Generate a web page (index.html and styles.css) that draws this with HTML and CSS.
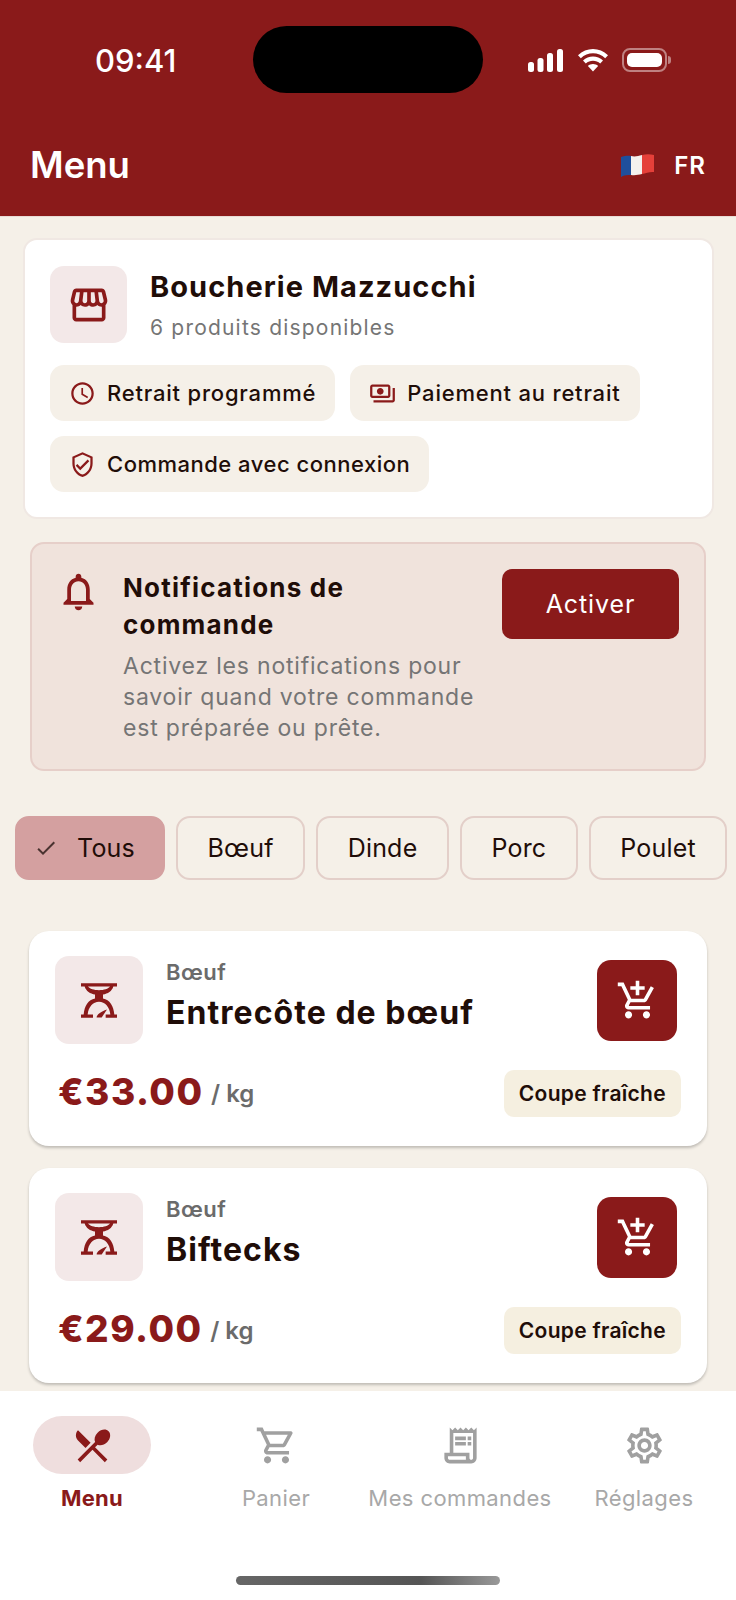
FILE: index.html
```html
<!DOCTYPE html>
<html lang="fr">
<head>
<meta charset="UTF-8">
<meta name="viewport" content="width=device-width, initial-scale=1.0">
<title>Menu</title>
<link rel="stylesheet" href="styles.css">
</head>
<body>

<svg class="sprite" width="0" height="0">
    <symbol id="i-scale" viewBox="0 0 108 104">
        <path d="M0 0H108V10H97C93 24 80 32 66 34V46C86 50 98 68 100 94H108V104H74V94H88C86 72 72 56 54 56C36 56 22 72 20 94H36V104H0V94H8C10 68 22 50 42 46V34C28 32 15 24 11 10H0ZM21 10C26 17 39 21 54 21C69 21 82 17 87 10Z"/>
        <path d="M78 79L62 103H47C46 95 60 85 78 79Z"/>
    </symbol>
    <symbol id="i-cart-add" viewBox="0 0 24 24">
        <path d="M11 9h2V6h3V4h-3V1h-2v3H8v2h3v3zm-4 9c-1.1 0-1.99.9-1.99 2S5.9 22 7 22s2-.9 2-2-.9-2-2-2zm10 0c-1.1 0-1.99.9-1.99 2s.89 2 1.99 2 2-.9 2-2-.9-2-2-2zm-9.83-3.25l.03-.12.9-1.63h7.45c.75 0 1.41-.41 1.75-1.03l3.86-7.01L19.42 4h-.01l-1.1 2-2.76 5H8.53l-.13-.27L6.16 6l-.95-2-.94-2H1v2h2l3.6 7.59-1.35 2.45c-.16.28-.25.61-.25.96 0 1.1.9 2 2 2h12v-2H7.42c-.13 0-.25-.11-.25-.25z"/>
    </symbol>
</svg>

<header class="topbar">
    <div class="island"></div>
    <div class="status">
        <span class="time">09:41</span>
        <div class="status-icons">
            <svg class="ic-signal" viewBox="0 0 35 23"><rect x="0" y="13" width="6" height="10" rx="2.5"/><rect x="9.5" y="9" width="6" height="14" rx="2.5"/><rect x="19" y="4" width="6" height="19" rx="2.5"/><rect x="29" y="0" width="6" height="23" rx="2.5"/></svg>
            <svg class="ic-wifi" viewBox="0 0 30 23"><path d="M15 0C20.500 0 25.700 2.200 30 6.200L27.200 9.200C23.800 6 19.500 4.200 15 4.200C10.500 4.200 6.200 6 2.800 9.200L0 6.200C4.300 2.200 9.500 0 15 0Z"/><path d="M15 7.500C18.700 7.500 22.200 9 25 11.500L22.200 14.500C20.200 12.700 17.700 11.700 15 11.700C12.300 11.700 9.800 12.700 7.800 14.500L5 11.500C7.800 9 11.300 7.500 15 7.500Z"/><path d="M15 15C16.900 15 18.700 15.700 20.100 16.900L15 22.500L9.900 16.900C11.300 15.700 13.100 15 15 15Z"/></svg>
            <div class="battery"><div class="battery-fill"></div></div>
        </div>
    </div>
    <div class="title-row">
        <h1>Menu</h1>
        <div class="lang">
            <svg class="flag" viewBox="0 0 33 23">
                <path fill="#1f4f9c" d="M0 3C3 2 7 1.500 10 2V21C7 21 3 21 0 23Z"/>
                <path fill="#f4f1ee" d="M10 2C14 3 17 2 21 1V20C17 21 14 21.500 10 21Z"/>
                <path fill="#e5403a" d="M21 1C25 0 29 0 33 1V18C29 17.500 25 19 21 20Z"/>
            </svg>
            <span>FR</span>
        </div>
    </div>
</header>

<main class="content">
    <section class="shop">
        <div class="shop-head">
            <div class="shop-logo">
                <svg class="ic-store" viewBox="0 0 24 24"><path d="M21.9 8.89l-1.05-4.37c-.22-.9-1-1.52-1.91-1.52H5.05c-.9 0-1.69.63-1.9 1.52L2.1 8.89c-.24 1.02-.02 2.06.62 2.88.08.11.19.19.28.29V19c0 1.1.9 2 2 2h14c1.1 0 2-.9 2-2v-6.94c.09-.09.2-.18.28-.28.64-.82.87-1.87.62-2.89zm-2.99-3.9l1.05 4.37c.1.42.01.84-.25 1.17-.14.18-.44.47-.94.47-.61 0-1.14-.49-1.21-1.14L16.98 5l1.93-.01zM13 5h1.96l.54 4.52c.05.39-.07.78-.33 1.07-.22.26-.54.41-.95.41-.67 0-1.22-.59-1.22-1.31V5zM8.49 9.52L9.04 5H11v4.69c0 .72-.55 1.31-1.29 1.31-.34 0-.65-.15-.89-.41-.25-.29-.37-.68-.33-1.07zm-4.45-.16L5.05 5h1.97l-.58 4.86c-.08.65-.6 1.14-1.21 1.14-.49 0-.8-.29-.93-.47-.27-.32-.36-.75-.26-1.17zM5 19v-6.03c.08.01.15.03.23.03.87 0 1.66-.36 2.24-.95.6.6 1.4.95 2.31.95.87 0 1.65-.36 2.23-.93.59.57 1.39.93 2.29.93.84 0 1.64-.35 2.24-.95.58.59 1.37.95 2.24.95.08 0 .15-.02.23-.03V19H5z"/></svg>
            </div>
            <div class="shop-text">
                <h2 class="shop-name">Boucherie Mazzucchi</h2>
                <p class="shop-sub">6 produits disponibles</p>
            </div>
        </div>
        <div class="shop-tags">
            <div class="shop-tag">
                <svg viewBox="0 0 24 24"><path d="M11.990 2C6.470 2 2 6.480 2 12s4.470 10 9.990 10C17.520 22 22 17.520 22 12S17.520 2 11.990 2zM12 20c-4.420 0-8-3.580-8-8s3.580-8 8-8 8 3.580 8 8-3.580 8-8 8zm.5-13H11v6l5.250 3.150.75-1.230-4.500-2.670z"/></svg>
                Retrait programmé
            </div>
            <div class="shop-tag">
                <svg viewBox="0 0 24 24"><path d="M19 14V6c0-1.100-.9-2-2-2H3c-1.100 0-2 .9-2 2v8c0 1.100.9 2 2 2h14c1.100 0 2-.9 2-2zm-2 0H3V6h14v8zm-7-7c-1.660 0-3 1.340-3 3s1.340 3 3 3 3-1.340 3-3-1.340-3-3-3zm13 0v11c0 1.100-.9 2-2 2H4v-2h17V7h2z"/></svg>
                Paiement au retrait
            </div>
            <div class="shop-tag long">
                <svg viewBox="0 0 24 24"><path d="M12 1L3 5v6c0 5.550 3.840 10.740 9 12 5.160-1.260 9-6.450 9-12V5l-9-4zm7 10c0 4.520-2.980 8.690-7 9.930-4.020-1.240-7-5.410-7-9.930V6.300l7-3.110 7 3.110V11zm-11.590.59L6 13l4 4 8-8-1.410-1.420L10 14.170z"/></svg>
                Commande avec connexion
            </div>
        </div>
    </section>

    <section class="notice">
        <svg class="ic-bell" viewBox="0 0 24 24"><path d="M12 22c1.100 0 2-.9 2-2h-4c0 1.100.9 2 2 2zm6-6v-5c0-3.070-1.630-5.640-4.500-6.320V4c0-.83-.67-1.500-1.500-1.500s-1.500.67-1.500 1.500v.68C7.640 5.360 6 7.920 6 11v5l-2 2v1h16v-1l-2-2zm-2 1H8v-6c0-2.480 1.510-4.500 4-4.500s4 2.020 4 4.500v6z"/></svg>
        <div class="notice-text">
            <h3>Notifications de commande</h3>
            <p>Activez les notifications pour savoir quand votre commande est préparée ou prête.</p>
        </div>
        <button class="notice-btn">Activer</button>
    </section>

    <nav class="filters">
        <button class="filter active">
            <svg viewBox="0 0 24 24"><path d="M9 16.170L4.830 12l-1.420 1.410L9 19 21 7l-1.410-1.410z"/></svg>
            Tous
        </button>
        <button class="filter">Bœuf</button>
        <button class="filter">Dinde</button>
        <button class="filter">Porc</button>
        <button class="filter">Poulet</button>
    </nav>

    <article class="product">
        <div class="product-top">
            <div class="product-pic"><svg class="ic-scale"><use href="#i-scale"/></svg></div>
            <div class="product-info">
                <div class="product-cat">Bœuf</div>
                <div class="product-name">Entrecôte de bœuf</div>
            </div>
            <button class="add-btn"><svg class="ic-add"><use href="#i-cart-add"/></svg></button>
        </div>
        <div class="product-bottom">
            <div class="product-price"><span class="price">€33.00</span> <span class="unit">/ kg</span></div>
            <span class="cut">Coupe fraîche</span>
        </div>
    </article>

    <article class="product">
        <div class="product-top">
            <div class="product-pic"><svg class="ic-scale"><use href="#i-scale"/></svg></div>
            <div class="product-info">
                <div class="product-cat">Bœuf</div>
                <div class="product-name">Biftecks</div>
            </div>
            <button class="add-btn"><svg class="ic-add"><use href="#i-cart-add"/></svg></button>
        </div>
        <div class="product-bottom">
            <div class="product-price"><span class="price">€29.00</span> <span class="unit">/ kg</span></div>
            <span class="cut">Coupe fraîche</span>
        </div>
    </article>
</main>

<footer class="tabbar">
    <div class="tabs">
        <div class="tab active">
            <div class="tab-icon"><svg viewBox="0 0 24 24"><path d="M8.100 13.340l2.830-2.830L3.910 3.500c-1.560 1.560-1.560 4.090 0 5.660l4.190 4.180zm6.780-1.810c1.530.71 3.680.21 5.270-1.380 1.910-1.910 2.280-4.650.81-6.120-1.460-1.460-4.200-1.100-6.120.81-1.590 1.590-2.090 3.740-1.380 5.270L3.700 19.870l1.410 1.410L12 14.410l6.880 6.880 1.410-1.410L13.410 13l1.470-1.470z"/></svg></div>
            <span>Menu</span>
        </div>
        <div class="tab">
            <div class="tab-icon"><svg viewBox="0 0 24 24"><path d="M15.550 13c.75 0 1.410-.41 1.750-1.030l3.580-6.490c.37-.66-.11-1.480-.87-1.480H5.210l-.94-2H1v2h2l3.600 7.590-1.350 2.440C4.520 15.370 5.480 17 7 17h12v-2H7l1.100-2h7.450zM6.160 6h12.150l-2.760 5H8.530L6.160 6zM7 18c-1.100 0-1.990.9-1.990 2S5.900 22 7 22s2-.9 2-2-.9-2-2-2zm10 0c-1.100 0-1.990.9-1.990 2s.89 2 1.990 2 2-.9 2-2-.9-2-2-2z"/></svg></div>
            <span>Panier</span>
        </div>
        <div class="tab">
            <div class="tab-icon"><svg viewBox="0 0 24 24"><path d="M19.500 3.500L18 2l-1.500 1.500L15 2l-1.500 1.500L12 2l-1.500 1.500L9 2 7.500 3.500 6 2v14H3v3c0 1.660 1.340 3 3 3h12c1.660 0 3-1.340 3-3V2l-1.500 1.500zM15 20H6c-.55 0-1-.45-1-1v-1h10v2zm4-1c0 .55-.45 1-1 1s-1-.45-1-1v-3H8V5h11v14z"/><path d="M9 7h6v2H9zM16 7h2v2h-2zM9 10h6v2H9zM16 10h2v2h-2z"/></svg></div>
            <span>Mes commandes</span>
        </div>
        <div class="tab">
            <div class="tab-icon"><svg viewBox="0 0 24 24"><path d="M19.430 12.980c.04-.32.07-.64.07-.98 0-.34-.03-.66-.07-.98l2.110-1.650c.19-.15.24-.42.12-.64l-2-3.460c-.09-.16-.26-.25-.44-.25-.06 0-.12.01-.17.03l-2.490 1c-.52-.4-1.080-.73-1.690-.98l-.38-2.650C14.460 2.180 14.250 2 14 2h-4c-.25 0-.46.18-.49.42l-.38 2.650c-.61.25-1.170.59-1.690.98l-2.490-1c-.06-.02-.12-.03-.18-.03-.17 0-.34.09-.43.25l-2 3.460c-.13.22-.07.49.12.64l2.110 1.650c-.04.32-.07.65-.07.98 0 .33.03.66.07.98l-2.110 1.650c-.19.15-.24.42-.12.64l2 3.460c.09.16.26.25.44.25.06 0 .12-.01.17-.03l2.490-1c.52.4 1.080.73 1.690.98l.38 2.650c.03.24.24.42.49.42h4c.25 0 .46-.18.49-.42l.38-2.650c.61-.25 1.170-.59 1.690-.98l2.490 1c.06.02.12.03.18.03.17 0 .34-.09.43-.25l2-3.460c.12-.22.07-.49-.12-.64l-2.110-1.650zm-1.980-1.710c.04.31.05.52.05.73 0 .21-.02.43-.05.73l-.14 1.130.89.7 1.080.84-.7 1.210-1.270-.51-1.040-.42-.9.68c-.43.32-.84.56-1.250.73l-1.060.43-.16 1.130-.2 1.350h-1.400l-.19-1.350-.16-1.130-1.060-.43c-.43-.18-.83-.41-1.230-.71l-.91-.7-1.060.43-1.270.51-.7-1.210 1.080-.84.89-.7-.14-1.130c-.03-.31-.05-.54-.05-.74s.02-.43.05-.73l.14-1.130-.89-.7-1.080-.84.7-1.210 1.270.51 1.040.42.9-.68c.43-.32.84-.56 1.250-.73l1.060-.43.16-1.130.2-1.350h1.390l.19 1.350.16 1.130 1.060.43c.43.18.83.41 1.230.71l.91.7 1.060-.43 1.270-.51.7 1.210-1.070.85-.89.7.14 1.130zM12 8c-2.210 0-4 1.790-4 4s1.790 4 4 4 4-1.790 4-4-1.790-4-4-4zm0 6c-1.100 0-2-.9-2-2s.9-2 2-2 2 .9 2 2-.9 2-2 2z"/></svg></div>
            <span>Réglages</span>
        </div>
    </div>
    <div class="home-bar"></div>
</footer>

</body>
</html>
```

FILE: styles.css
```css
* {
    box-sizing: border-box;
}

body {
    display: flex;
    flex-direction: column;
    height: 1600px;
    margin: 0;
    overflow: hidden;
    font-family: Inter, "Noto Sans", sans-serif;
    color: #1f0d08;
    background-color: #f5f0e8;
}

h1, h2, h3, p {
    margin: 0;
}

button {
    font-family: inherit;
}

.sprite {
    position: absolute;
}

/* top bar */
.topbar {
    position: relative;
    flex: none;
    height: 217px;
    padding-top: 48px;
    background-color: #8a1a1a;
    border-bottom: 1px solid #e9dcd6;
    color: #fff;
}

.island {
    position: absolute;
    left: 253px;
    top: 26px;
    width: 230px;
    height: 67px;
    border-radius: 34px;
    background-color: #000;
}

.status {
    display: flex;
    justify-content: space-between;
    align-items: center;
    height: 24px;
    padding: 0 69px 0 95px;
}

.time {
    font-size: 31px;
    font-weight: 500;
}

.status-icons {
    display: flex;
    align-items: center;
    gap: 14px;
}

.status-icons svg {
    fill: #fff;
    display: block;
}

.ic-signal {
    width: 35px;
    height: 23px;
    margin-right: 1px;
}

.ic-wifi {
    width: 30px;
    height: 23px;
}

.battery {
    position: relative;
    width: 45px;
    height: 24px;
    padding: 3px;
    border: 2px solid rgba(255, 255, 255, 0.45);
    border-radius: 8px;
}

.battery::after {
    content: "";
    position: absolute;
    right: -6px;
    top: 6px;
    width: 3px;
    height: 8px;
    border-radius: 0 3px 3px 0;
    background-color: rgba(255, 255, 255, 0.45);
}

.battery-fill {
    width: 100%;
    height: 100%;
    border-radius: 5px;
    background-color: #fff;
}

.title-row {
    display: flex;
    justify-content: space-between;
    align-items: center;
    height: 42px;
    margin-top: 72px;
    padding: 0 30px 0 30px;
}

.title-row h1 {
    font-size: 36.5px;
    font-weight: 600;
}

.lang {
    display: flex;
    align-items: center;
    gap: 20px;
    font-size: 24px;
    font-weight: 600;
    letter-spacing: 1px;
}

.flag {
    width: 33px;
    height: 23px;
}

/* content */
.content {
    flex: 1;
    min-height: 0;
    overflow: hidden;
}

.shop {
    margin: 21px 22px 0 23px;
    padding: 26px 25px 25px 25px;
    background-color: #fff;
    border: 2px solid #f0e8e3;
    border-radius: 14px;
}

.shop-head {
    display: flex;
    align-items: center;
    gap: 23px;
}

.shop-logo {
    display: flex;
    justify-content: center;
    align-items: center;
    width: 77px;
    height: 77px;
    border-radius: 14px;
    background-color: #f3e8e8;
}

.ic-store {
    width: 44px;
    height: 44px;
    fill: #8a1a1a;
}

.shop-text {
    padding-top: 2px;
}

.shop-name {
    font-size: 29px;
    font-weight: 700;
    letter-spacing: 1.05px;
    line-height: 36px;
}

.shop-sub {
    margin-top: 9px;
    font-size: 21px;
    line-height: 28px;
    letter-spacing: 1.2px;
    color: #757575;
}

.shop-tags {
    display: flex;
    flex-wrap: wrap;
    gap: 15px;
    margin-top: 22px;
}

.shop-tag {
    display: flex;
    align-items: center;
    gap: 11px;
    height: 56px;
    padding: 0 19px;
    border-radius: 14px;
    background-color: #f5f0e8;
    font-size: 22px;
    font-weight: 500;
    letter-spacing: 0.8px;
}

.shop-tag.long {
    letter-spacing: 0.5px;
}

.shop-tag svg {
    width: 27px;
    height: 27px;
    fill: #8a1a1a;
}

.notice {
    display: flex;
    align-items: flex-start;
    margin: 23px 30px 0;
    padding: 25px 25px 25px 24px;
    background-color: #f0e3dc;
    border: 2px solid #e6cfc9;
    border-radius: 14px;
}

.ic-bell {
    flex: none;
    width: 45px;
    height: 45px;
    margin-right: 22px;
    fill: #8a1a1a;
}

.notice-text {
    width: 352px;
    flex: none;
}

.notice-text h3 {
    font-size: 26px;
    font-weight: 700;
    line-height: 37px;
    letter-spacing: 1.2px;
}

.notice-text p {
    margin-top: 8px;
    font-size: 23px;
    line-height: 31px;
    letter-spacing: 0.8px;
    color: #757575;
}

.notice-btn {
    flex: none;
    width: 177px;
    height: 70px;
    margin-left: auto;
    border: none;
    border-radius: 10px;
    background-color: #8a1a1a;
    color: #fff;
    font-size: 25px;
    font-weight: 400;
    letter-spacing: 0.9px;
}

.filters {
    display: flex;
    gap: 11px;
    margin-top: 45px;
    padding-left: 15px;
}

.filter {
    display: flex;
    justify-content: center;
    align-items: center;
    height: 64px;
    padding: 0 29.5px;
    background-color: #f5f0e8;
    border: 2px solid #e3cfc9;
    border-radius: 14px;
    color: #1f0d08;
    font-size: 25px;
    letter-spacing: 0.2px;
}

.filter svg {
    width: 24px;
    height: 24px;
    margin-right: 19px;
    fill: #4a3330;
}

.filter.active {
    padding: 0 28px 0 17px;
    background-color: #d4a0a0;
    border-color: #d4a0a0;
}

.product {
    margin: 0 29px 22px;
    padding: 25px 26px 29px;
    background-color: #fff;
    border-radius: 20px;
    box-shadow: 0 2px 3px rgba(0, 0, 0, 0.22);
}

.filters + .product {
    margin-top: 51px;
}

.product-top {
    display: flex;
    align-items: center;
}

.product-pic {
    display: flex;
    flex: none;
    justify-content: center;
    align-items: center;
    width: 88px;
    height: 88px;
    margin-right: 23px;
    border-radius: 14px;
    background-color: #f3e8e8;
}

.ic-scale {
    width: 36px;
    height: 35px;
    fill: #8a1a1a;
}

.product-info {
    flex: 1;
    margin-top: -9px;
}

.product-cat {
    font-size: 22px;
    font-weight: 600;
    line-height: 28px;
    letter-spacing: 0.5px;
    color: #6b6b6b;
}

.product-name {
    margin-top: 7px;
    font-size: 32px;
    font-weight: 700;
    line-height: 40px;
    letter-spacing: 1.05px;
}

.add-btn {
    display: flex;
    justify-content: center;
    align-items: center;
    width: 80px;
    height: 81px;
    margin-right: 4px;
    padding: 0;
    border: none;
    border-radius: 14px;
    background-color: #8a1a1a;
}

.ic-add {
    width: 43px;
    height: 43px;
    fill: #fff;
}

.product-bottom {
    display: flex;
    justify-content: space-between;
    align-items: center;
    margin-top: 26px;
}

.product-price {
    margin-top: -4px;
    padding-left: 3px;
}

.price {
    font-size: 37px;
    font-weight: 800;
    letter-spacing: 1.5px;
    color: #8a1a1a;
}

.unit {
    margin-left: 3px;
    font-size: 24px;
    font-weight: 600;
    vertical-align: 3px;
    color: #6b6b6b;
}

.cut {
    display: flex;
    align-items: center;
    height: 47px;
    padding: 0 15px;
    border-radius: 10px;
    background-color: #f5efe0;
    font-size: 21px;
    font-weight: 600;
    letter-spacing: 0.3px;
}

/* bottom tabs */
.tabbar {
    flex: none;
    height: 209px;
    padding-top: 25px;
    background-color: #fff;
}

.tabs {
    display: grid;
    grid-template-columns: repeat(4, 184px);
}

.tab {
    display: flex;
    flex-direction: column;
    align-items: center;
    gap: 10px;
    font-size: 22px;
    line-height: 28px;
    letter-spacing: 0.4px;
    color: #a8a8a8;
    white-space: nowrap;
}

.tab-icon {
    display: flex;
    justify-content: center;
    align-items: center;
    width: 118px;
    height: 58px;
    border-radius: 29px;
}

.tab-icon svg {
    width: 43px;
    height: 43px;
    fill: #a0a0a0;
}

.tab.active {
    font-weight: 700;
    letter-spacing: 0.3px;
    color: #8a1a1a;
}

.tab.active .tab-icon {
    background-color: #efdede;
}

.tab.active svg {
    fill: #8a1a1a;
}

.home-bar {
    width: 264px;
    height: 9px;
    margin: 64px auto 0;
    border-radius: 5px;
    background: linear-gradient(90deg, #666, #555 70%, #999);
}
```
